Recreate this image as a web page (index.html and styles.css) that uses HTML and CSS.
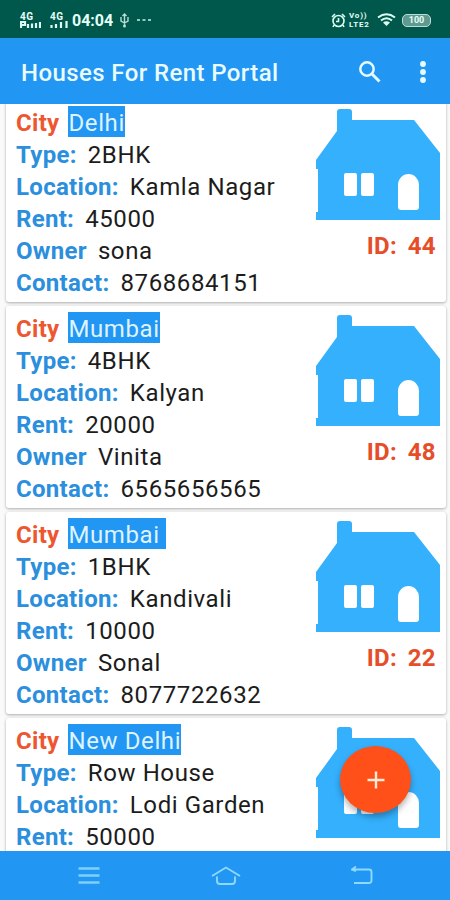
FILE: index.html
```html
<!DOCTYPE html>
<html lang="en">
<head>
<meta charset="utf-8">
<title>Houses For Rent Portal</title>
<link rel="stylesheet" href="styles.css">
</head>
<body>
<svg class="defs" width="0" height="0" aria-hidden="true">
  <symbol id="house" viewBox="0 0 126 112">
    <path fill="#35b0fd" fill-rule="evenodd" d="M22 3Q22 0 25 0H34Q37 0 37 3V11H99L125 44V111H1V103H3V60H1V51L22 22ZM31 64Q29 64 29 66V85Q29 87 31 87H40Q42 87 42 85V66Q42 64 40 64ZM48 64Q46 64 46 66V85Q46 87 48 87H57Q59 87 59 85V66Q59 64 57 64ZM83 76V98Q83 101 86 101H101Q104 101 104 98V76A10.5 11 0 0 0 83 76Z"/>
  </symbol>
</svg>
<div class="screen">
  <header class="status">
    <div class="network"><span>4G</span><svg width="21" height="7" viewBox="0 0 21 7"><path fill="none" stroke="#d9fff3" stroke-width="2.2" d="M1 7V1H5V4H1M8 7V3M12 7V2.500M16 7V2M20 7V1"/></svg></div>
    <div class="network second"><span>4G</span><svg width="18" height="7" viewBox="0 0 18 7"><path fill="none" stroke="#d9fff3" stroke-width="2.200" d="M1.500 7V4M6 7V3M11 7V1M16.500 7V0"/></svg></div>
    <span class="time">04:04</span>
    <svg class="usb" width="11" height="15" viewBox="0 0 11 15"><path d="M5.500 1V13M2 4V8L5.500 10L9 8V4M3.500 3L5.500 1L7.500 3" fill="none" stroke="#b4ddd4" stroke-width="1.400"/><circle cx="5.500" cy="13" r="1.500" fill="#b4ddd4"/></svg>
    <svg class="more" width="16" height="4" viewBox="0 0 16 4"><path d="M1 2H4M6.500 2H9.500M12 2H15" stroke="#9acabf" stroke-width="2"/></svg>
    <div class="status-right">
      <svg width="15" height="15" viewBox="0 0 15 15"><g fill="none" stroke="#d9fff3" stroke-width="1.600"><circle cx="7.500" cy="8" r="5.500"/><path d="M1 4L4 1M11 1L14 4M7.500 5V8.500H5M3 12L2 14M12 12L13 14"/></g></svg>
      <div class="volte"><span>Vo))</span><span>LTE2</span></div>
      <svg width="19" height="14" viewBox="0 0 19 14"><g fill="none" stroke="#d9fff3" stroke-width="2"><path d="M1 4.500Q9.500-2 18 4.500M4 7.500Q9.500 3 15 7.500"/></g><path d="M6 9.500Q9.500 7 13 9.500L9.500 13Z" fill="#d9fff3"/></svg>
      <div class="battery">100</div>
    </div>
  </header>
  <nav class="appbar">
    <h1>Houses For Rent Portal</h1>
    <svg class="search" width="24" height="24" viewBox="0 0 24 24"><circle cx="9" cy="9" r="6.700" fill="none" stroke="#e6fbff" stroke-width="2.500"/><path d="M14 14L21.500 21.500" stroke="#e6fbff" stroke-width="3"/></svg>
    <svg class="overflow" width="6" height="22" viewBox="0 0 6 22"><g fill="#e6fbff"><circle cx="3" cy="3" r="2.900"/><circle cx="3" cy="11" r="2.900"/><circle cx="3" cy="19" r="2.900"/></g></svg>
  </nav>
  <main class="list">
    <article class="card">
      <div class="details">
        <p><b class="city">City</b><mark>Delhi</mark></p>
        <p><b>Type:</b><span>2BHK</span></p>
        <p><b>Location:</b><span>Kamla Nagar</span></p>
        <p><b>Rent:</b><span>45000</span></p>
        <p><b>Owner</b><span>sona</span></p>
        <p><b>Contact:</b><span>8768684151</span></p>
      </div>
      <div class="side"><svg width="126" height="112"><use href="#house"/></svg><strong>ID: 44</strong></div>
    </article>
    <article class="card">
      <div class="details">
        <p><b class="city">City</b><mark>Mumbai</mark></p>
        <p><b>Type:</b><span>4BHK</span></p>
        <p><b>Location:</b><span>Kalyan</span></p>
        <p><b>Rent:</b><span>20000</span></p>
        <p><b>Owner</b><span>Vinita</span></p>
        <p><b>Contact:</b><span>6565656565</span></p>
      </div>
      <div class="side"><svg width="126" height="112"><use href="#house"/></svg><strong>ID: 48</strong></div>
    </article>
    <article class="card">
      <div class="details">
        <p><b class="city">City</b><mark>Mumbai </mark></p>
        <p><b>Type:</b><span>1BHK</span></p>
        <p><b>Location:</b><span>Kandivali</span></p>
        <p><b>Rent:</b><span>10000</span></p>
        <p><b>Owner</b><span>Sonal</span></p>
        <p><b>Contact:</b><span>8077722632</span></p>
      </div>
      <div class="side"><svg width="126" height="112"><use href="#house"/></svg><strong>ID: 22</strong></div>
    </article>
    <article class="card">
      <div class="details">
        <p><b class="city">City</b><mark>New Delhi</mark></p>
        <p><b>Type:</b><span>Row House</span></p>
        <p><b>Location:</b><span>Lodi Garden</span></p>
        <p><b>Rent:</b><span>50000</span></p>
      </div>
      <div class="side"><svg width="126" height="112"><use href="#house"/></svg></div>
    </article>
    <button class="fab" aria-label="Add"><svg width="18" height="18" viewBox="0 0 18 18"><path d="M9 0.500V17.500M0.500 9H17.500" stroke="#ffe9d8" stroke-width="2.400"/></svg></button>
  </main>
  <footer class="navbar">
    <svg width="22" height="20" viewBox="0 0 22 20"><path d="M0.500 2.500H21.500M0.500 9.500H21.500M0.500 16.500H21.500" stroke="#7fd0ff" stroke-width="2.300"/></svg>
    <svg width="30" height="20" viewBox="0 0 30 20"><path d="M1 10L15 1.500L29 10M6 10.500V15Q6 18 9 18H21Q24 18 24 15V10.500" fill="none" stroke="#8ed9ff" stroke-width="1.900"/></svg>
    <svg width="22" height="20" viewBox="0 0 22 20"><path d="M1 3.500H18Q20.500 3.500 20.500 6V14.500Q20.500 17 18 17H3M5 0.500L1 3.500L5 5" fill="none" stroke="#8ed9ff" stroke-width="1.900"/></svg>
  </footer>
</div>
</body>
</html>
```
FILE: styles.css
```css
* { box-sizing: border-box; }
body { margin: 0; font-family: Roboto, "Liberation Sans", sans-serif; }
.defs { display: none; }
.screen { width: 450px; height: 900px; overflow: hidden; display: flex; flex-direction: column; background: #fafafa; }
svg { display: block; flex: none; }

.status { height: 38px; flex: none; background: #00574b; color: #e4fff8; display: flex; align-items: center; padding: 2px 19px 0 20px; }
.network { display: flex; flex-direction: column; width: 21px; margin-right: 9px; font-size: 10px; line-height: 8px; font-weight: 700; letter-spacing: .5px; }
.second { width: 18px; margin-right: 4px; }
.time { width: 42px; font-size: 16px; font-weight: 700; }
.usb { margin-left: 5px; }
.more { margin-left: 6px; }
.status-right { margin-left: auto; display: flex; align-items: center; }
.volte { width: 23px; margin: 0 5px 0 3px; display: flex; flex-direction: column; font-size: 8px; line-height: 9px; font-weight: 700; letter-spacing: .8px; }
.battery { width: 29px; height: 13px; margin-left: 6px; border: 1.5px solid #b9ded7; border-radius: 5px; background: #5f998f; font-size: 9px; line-height: 10px; font-weight: 700; text-align: center; }

.appbar { height: 66px; flex: none; z-index: 1; background: #2196f3; display: flex; align-items: center; padding: 2px 24px 0 21px; }
h1 { flex: 1; margin: 0; padding-top: 1px; color: #e9fbff; font-size: 24px; font-weight: 500; letter-spacing: .4px; white-space: nowrap; }
.search { margin: 0 38px 0 0; }

.list { flex: 1; min-height: 0; position: relative; overflow: hidden; padding: 0 4px 0 6px; }
.card { height: 202px; margin-bottom: 4px; padding: 6px 5px 0 10px; display: flex; justify-content: space-between; background: #fff; border-radius: 3px; box-shadow: 0 1px 3px rgba(0,0,0,.32); }
.card:first-child { margin-top: -4px; }
.details { font-size: 24px; line-height: 34.5px; color: #1c1c1c; letter-spacing: .6px; }
.details p { height: 32px; margin: 0; display: flex; white-space: pre; }
b { margin-right: 11px; color: #2b8fdd; font-weight: 700; letter-spacing: .3px; }
.city { margin-right: 9px; color: #ed5630; }
mark { height: 31px; background: #2196f3; color: #dff3ff; }
.side { padding-top: 3px; display: flex; flex-direction: column; align-items: flex-end; }
strong { margin: 9px 5px 0 0; color: #e64e29; font-size: 24px; line-height: 32px; letter-spacing: .4px; word-spacing: 4px; }
.fab { position: absolute; left: 340px; top: 642px; width: 71px; height: 67px; padding: 0; border: 0; border-radius: 50%; background: #ff5019; box-shadow: 0 4px 6px rgba(0,0,0,.3); display: grid; place-items: center; }

.navbar { height: 49px; flex: none; background: #2196f3; display: flex; justify-content: space-between; align-items: center; padding: 0 77px 0 78px; }
```
